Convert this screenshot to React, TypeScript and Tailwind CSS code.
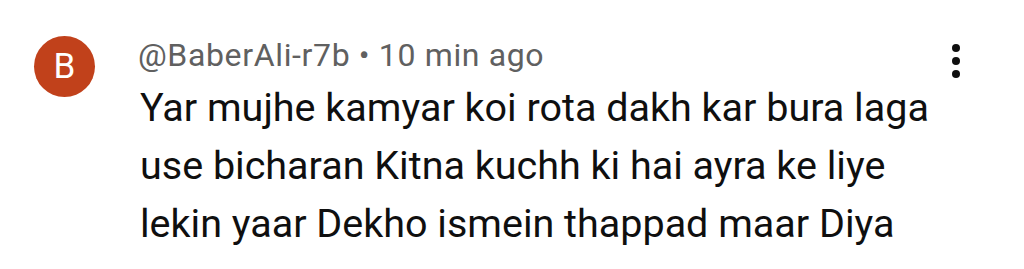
export default function App() {
  const lines = [
    'Yar mujhe kamyar koi rota dakh kar bura laga',
    'use bicharan Kitna kuchh ki hai ayra ke liye',
    'lekin yaar Dekho ismein thappad maar Diya',
  ]

  return (
    <div className="flex h-[269px] w-[1024px] bg-white pl-[34px] pr-[64px] pt-[36px] font-['Roboto',sans-serif]">
      {/* avatar */}
      <div className="flex h-[61px] w-[61px] shrink-0 items-center justify-center rounded-full bg-[#c1411b]">
        <span className="text-[35px] leading-none text-white">B</span>
      </div>
      <div className="ml-[43px] flex-1">
        <p className="whitespace-nowrap text-[32px] leading-[38px] tracking-[0.02em] text-[#606060]">
          @BaberAli-r7b • 10 min ago
        </p>
        <div className="mt-[5px] ml-[2px]">
          {lines.map((line) => (
            <p key={line} className="whitespace-nowrap text-[39.5px] leading-[58px] text-[#0f0f0f]">
              {line}
            </p>
          ))}
        </div>
      </div>
      <div className="flex flex-col items-center gap-[5px] pt-[8px]">
        <span className="h-[8px] w-[8px] rounded-full bg-[#0f0f0f]" />
        <span className="h-[8px] w-[8px] rounded-full bg-[#0f0f0f]" />
        <span className="h-[8px] w-[8px] rounded-full bg-[#0f0f0f]" />
      </div>
    </div>
  )
}
